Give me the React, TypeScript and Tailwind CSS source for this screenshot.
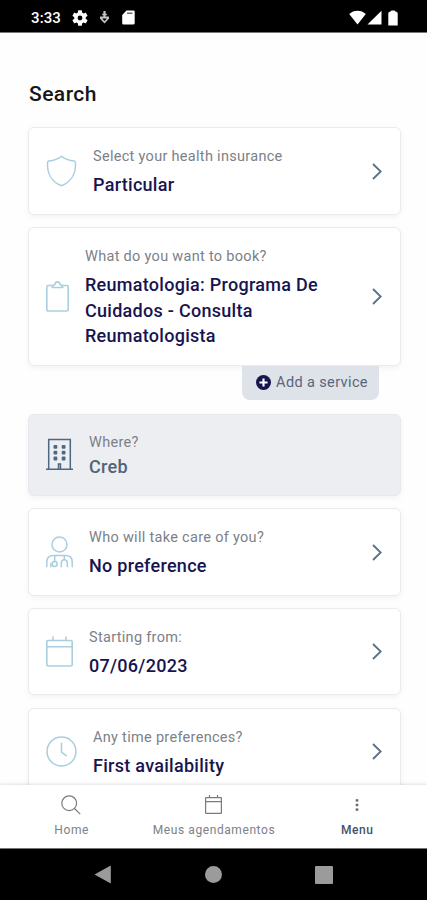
import type { ReactNode } from 'react'
import clsx from 'clsx'

function ShieldIcon() {
  return (
    <svg width="31" height="32" viewBox="0 0 30 32" fill="none" stroke="#a9cfdf" strokeWidth="1.5" strokeLinejoin="round">
      <path d="M15 1.2C11.5 4.200 6.500 5.600 2.200 6C1.300 6.200 1 6.800 1 8C.6 18 5 27 15 30.800C25 27 29.400 18 29 8C29 6.800 28.700 6.200 27.800 6C23.500 5.600 18.500 4.200 15 1.200Z" />
    </svg>
  )
}

function ClipboardIcon() {
  return (
    <svg width="23" height="31" viewBox="0 0 23 31" fill="none" stroke="#a9cfdf" strokeWidth="1.600" strokeLinejoin="round">
      <path d="M6.500 4.500H2.300A1.500 1.500 0 0 0 .8 6V28.500A1.500 1.500 0 0 0 2.300 30H20.700A1.500 1.500 0 0 0 22.200 28.500V6A1.500 1.500 0 0 0 20.700 4.500H16.500" />
      <path d="M6.300 6.500C6.300 4.300 7.500 3.700 9 3.500C9.200 1.800 10.100 .9 11.500 .9S13.800 1.800 14 3.500C15.500 3.700 16.700 4.300 16.700 6.500Z" />
    </svg>
  )
}

function BuildingIcon() {
  return (
    <svg width="27" height="33" viewBox="0 0 27 33" fill="none" stroke="#4d6880" strokeWidth="1.5">
      <path d="M2.700 31V1.500H24.300V31M0 31.300H27" />
      <path d="M12.500 31V26H14.500V31" />
      <g fill="#4d6880" stroke="none">
        <rect x="7.500" y="7" width="3.800" height="3.800" rx="1" />
        <rect x="15.700" y="7" width="3.800" height="3.800" rx="1" />
        <rect x="7.500" y="12.800" width="3.800" height="3.800" rx="1" />
        <rect x="15.700" y="12.800" width="3.800" height="3.800" rx="1" />
        <rect x="7.500" y="18.600" width="3.800" height="3.800" rx="1" />
        <rect x="15.700" y="18.600" width="3.800" height="3.800" rx="1" />
      </g>
    </svg>
  )
}

function DoctorIcon() {
  return (
    <svg width="27" height="32" viewBox="0 0 27 32" fill="none" stroke="#a9cfdf" strokeWidth="1.500" strokeLinecap="round">
      <circle cx="13.500" cy="8.500" r="7.500" />
      <path d="M.8 30.800V26C.8 22 3.500 19.600 7.500 19.600H19.500C23.500 19.600 26.200 22 26.200 26V30.800" />
      <path d="M8.700 19.800V25.500M18.300 19.800V23.500M15.300 30.800V27C15.300 25 16.400 23.800 18.300 23.800S21.300 25 21.300 27V30.800M4.900 30.800V27.500" />
      <circle cx="8.700" cy="28" r="2.500" />
    </svg>
  )
}

function CalendarIcon() {
  return (
    <svg width="27" height="31" viewBox="0 0 27 31" fill="none" stroke="#a9cfdf" strokeWidth="1.600">
      <rect x=".8" y="4.500" width="25.400" height="25.500" rx="1.500" />
      <path d="M.8 10.700H26.200M7 .5V4.500M20 .5V4.500" />
    </svg>
  )
}

function ClockIcon() {
  return (
    <svg width="31" height="31" viewBox="0 0 30 30" fill="none" stroke="#a9cfdf" strokeWidth="1.500" strokeLinecap="round">
      <circle cx="15" cy="15" r="14" />
      <path d="M15 7V15.500L19.500 19" />
    </svg>
  )
}

function Chevron() {
  return (
    <svg className="ml-auto shrink-0" width="10" height="17" viewBox="0 0 10 17" fill="none" stroke="#5b7084" strokeWidth="1.800">
      <path d="M1 1L8.700 8.500L1 16" />
    </svg>
  )
}

interface CardProps {
  icon: ReactNode
  label: string
  value: string
  className: string
  disabled?: boolean
}

function Card({ icon, label, value, className, disabled }: CardProps) {
  return (
    <div
      className={clsx(
        'flex w-full shrink-0 items-center gap-4 rounded-md border pl-[17px] pr-[18px] shadow-[0_2px_6px_rgba(0,0,0,0.05)]',
        disabled ? 'border-[#e7e9ed] bg-[#eceef2]' : 'border-[#ebebed] bg-white',
        className,
      )}
    >
      <div className="shrink-0">{icon}</div>
      <div className={clsx('max-w-[250px]', disabled ? 'pt-1' : 'pt-[3px]')}>
        <div className="text-[14.5px] leading-[20px] tracking-[0.3px] text-[#7c8188]">{label}</div>
        <div
          className={clsx(
            'text-[18px] font-medium leading-[25.700px] tracking-[0.28px]',
            disabled ? 'mt-px text-[#50647a]' : 'mt-[5px] text-[#17144f]',
          )}
        >
          {value}
        </div>
      </div>
      {!disabled && <Chevron />}
    </div>
  )
}

function StatusBar() {
  return (
    <div className="flex h-[33px] shrink-0 items-center border-b border-[#777] bg-black pl-[31px] pr-[29px] pt-[3px] text-white">
      <span className="w-[31px] pt-px text-[15px] font-medium tracking-[0.1px]">3:33</span>
      <svg className="ml-[10px]" width="16" height="16" viewBox="2 2 20 20" fill="#fff">
        <path d="M19.140 12.940c.04-.3.060-.61.060-.94s-.02-.64-.07-.94l2.030-1.580a.49.49 0 0 0 .12-.61l-1.920-3.320a.49.49 0 0 0-.59-.22l-2.390.96a7 7 0 0 0-1.620-.94l-.36-2.540A.48.48 0 0 0 13.920 2.400h-3.840a.48.48 0 0 0-.48.41l-.36 2.540c-.59.24-1.130.57-1.620.94l-2.390-.96a.48.48 0 0 0-.59.220L2.740 8.870a.48.48 0 0 0 .12.61l2.030 1.580c-.05.3-.09.630-.09.940s.02.640.07.940l-2.030 1.580a.49.49 0 0 0-.12.610l1.920 3.320c.12.220.370.290.590.220l2.390-.96c.5.380 1.030.7 1.620.940l.36 2.540c.05.240.24.410.48.410h3.840c.24 0 .44-.17.470-.41l.36-2.540a7 7 0 0 0 1.620-.94l2.390.96c.22.080.470 0 .59-.22l1.920-3.320a.48.48 0 0 0-.12-.61zM12 15a3 3 0 1 1 0-6 3 3 0 0 1 0 6z" />
      </svg>
      <svg className="ml-[11px]" width="11" height="13" viewBox="0 0 11 13" fill="none" stroke="#c4c4c4" strokeWidth="1.500">
        <path d="M5.500 0V7" strokeWidth="2.200" />
        <path d="M3.200 3.500H7.800" />
        <path d="M1 6.500H10M1.500 7L5.500 11.300L9.500 7" strokeWidth="1.800" />
      </svg>
      <svg className="ml-[12px]" width="13" height="15" viewBox="0 0 13 15">
        <path d="M4.500 .5H11.500A1.200 1.200 0 0 1 12.700 1.700V13A1.500 1.500 0 0 1 11.200 14.500H1.500A1.300 1.300 0 0 1 .2 13.200V5Z" fill="#fff" />
        <path d="M5 3.200H10.500" stroke="#555" strokeWidth="1.300" />
      </svg>
      <svg className="ml-auto" width="17" height="15" viewBox="0 0 17 15" fill="#fff">
        <path d="M8.500 14.500L.2 4C4.500-.5 12.500-.5 16.800 4Z" />
      </svg>
      <svg className="ml-px" width="15" height="15" viewBox="0 0 15 15" fill="#fff">
        <path d="M.5 14.500H14.500V.7Z" />
      </svg>
      <svg className="ml-[6px]" width="10" height="16" viewBox="0 0 10 16" fill="#fff">
        <path d="M.3 15.500V3.500C.3 2.300 1.500 1.500 2.500 1.500L3.500 .5H6.500L7.500 1.500C8.500 1.500 9.700 2.300 9.700 3.500V15.500Z" />
      </svg>
    </div>
  )
}

function NavBar() {
  return (
    <div className="z-10 flex h-[63px] shrink-0 bg-white text-[12px] leading-[16px] tracking-[0.58px] text-[#7c8188] shadow-[0_-1px_3px_rgba(0,0,0,0.12)]">
      <div className="flex flex-1 flex-col items-center">
        <svg className="mt-[10px]" width="20" height="20" viewBox="0 0 20 20" fill="none" stroke="#777b80" strokeWidth="1.200">
          <circle cx="8.200" cy="8.200" r="7.400" />
          <path d="M13.500 13.500L19.200 19.200" />
        </svg>
        <span className="mt-[7px] pl-px">Home</span>
      </div>
      <div className="flex flex-1 flex-col items-center">
        <svg className="ml-px mt-[10px]" width="17" height="19" viewBox="0 0 17 19" fill="none" stroke="#777b80" strokeWidth="1.200">
          <rect x=".6" y="2.600" width="15.800" height="15.800" rx=".5" />
          <path d="M.6 6.600H16.400M4.500 0V2.600M12.500 0V2.600" />
        </svg>
        <span className="mt-[8px] whitespace-nowrap pl-px">Meus agendamentos</span>
      </div>
      <div className="flex flex-1 flex-col items-center font-medium text-[#3f5468]">
        <svg className="ml-[3px] mt-[14px]" width="4" height="12" viewBox="0 0 4 12" fill="#666b70">
          <rect x=".7" y=".2" width="2.600" height="2.400" />
          <rect x=".7" y="4.800" width="2.600" height="2.400" />
          <rect x=".7" y="9.400" width="2.600" height="2.400" />
        </svg>
        <span className="mt-[11px] pl-[3px]">Menu</span>
      </div>
    </div>
  )
}

function SystemBar() {
  return (
    <div className="flex h-[52px] shrink-0 items-center justify-between border-t border-[#777] bg-black pl-[94px] pr-[94px]">
      <svg width="17" height="19" viewBox="0 0 17 19" fill="#9b9b9b">
        <path d="M16.800 .5V18.500L.5 9.500Z" />
      </svg>
      <div className="size-[17px] rounded-full bg-[#9b9b9b]" />
      <div className="size-[18px] rounded-[1px] bg-[#9b9b9b]" />
    </div>
  )
}

export default function App() {
  return (
    <div className="flex h-[900px] w-[427px] flex-col overflow-hidden bg-white font-['Roboto',sans-serif]">
      <StatusBar />

      <div className="flex min-h-0 flex-1 flex-col overflow-hidden bg-[#fefefe] pl-[28px] pr-[26px]">
        <h1 className="mt-[47px] pl-px text-[21px] font-medium leading-[28px] tracking-[0.45px] text-[#15161a]">Search</h1>

        <Card className="mt-[19px] h-[88px]" icon={<ShieldIcon />} label="Select your health insurance" value="Particular" />
        <Card
          className="mt-[12px] h-[139px]"
          icon={<ClipboardIcon />}
          label="What do you want to book?"
          value="Reumatologia: Programa De Cuidados - Consulta Reumatologista"
        />

        <button className="mr-[22px] flex h-[34px] w-[137px] shrink-0 items-center justify-center gap-[5px] self-end rounded-b-lg bg-[#dee2e9] pb-px pl-[3px] text-[14.5px] tracking-[0.38px] text-[#59657a]">
          <svg width="15" height="15" viewBox="0 0 14 14">
            <circle cx="7" cy="7" r="7" fill="#17144f" />
            <path d="M7 3.200V10.800M3.200 7H10.800" stroke="#fff" strokeWidth="2" />
          </svg>
          Add a service
        </button>

        <Card className="mt-[14px] h-[82px] pb-[2px]" icon={<BuildingIcon />} label="Where?" value="Creb" disabled />
        <Card className="mt-[12px] h-[88px]" icon={<DoctorIcon />} label="Who will take care of you?" value="No preference" />
        <Card className="mt-[12px] h-[87px]" icon={<CalendarIcon />} label="Starting from:" value="07/06/2023" />
        <Card className="mt-[13px] h-[87px]" icon={<ClockIcon />} label="Any time preferences?" value="First availability" />
      </div>

      <NavBar />
      <SystemBar />
    </div>
  )
}
